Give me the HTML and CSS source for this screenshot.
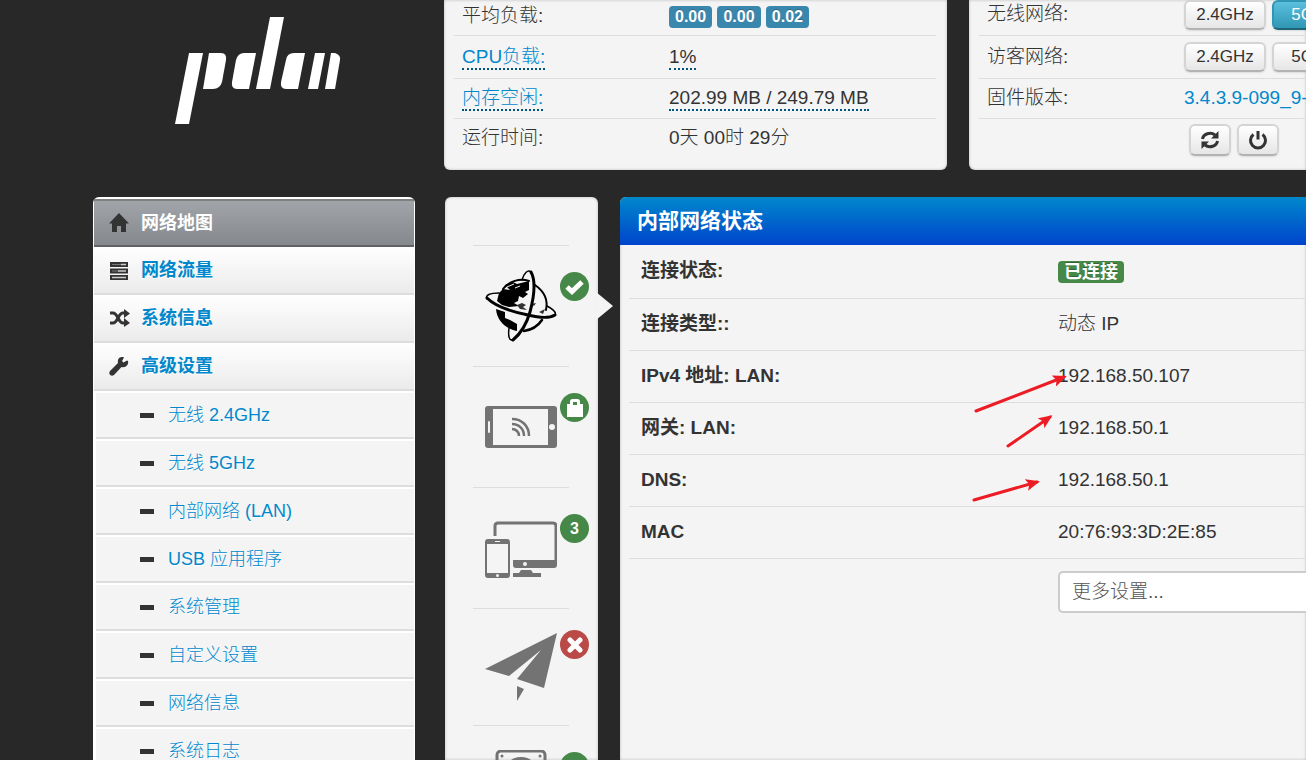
FILE: index.html
```html
<!DOCTYPE html>
<html lang="zh-CN">
<head>
    <meta charset="UTF-8">
    <meta name="viewport" content="width=device-width, initial-scale=1.0">
    <title>网络地图</title>
    <link rel="stylesheet" href="styles.css">
</head>
<body>
    <div class="wrapper">
        <header class="top-row">
            <a href="#" class="logo" aria-label="pdcn">
                <svg width="168" height="108" viewBox="0 0 168 108" fill="#fff">
                    <path d="M14 36H28L14 107H0Z"/>
                    <path d="M34 36H46Q52 36 51 43L47 65Q45 72 38 72H28Z"/>
                    <path d="M81 36H69Q63 36 61 43L57 65Q56 72 62 72H74Z"/>
                    <path d="M95 0H109L95 72H81Z"/>
                    <path d="M130 36H119Q112 36 111 43L106 65Q105 72 111 72H123Z"/>
                    <path d="M140 36H150L143 72H133Z"/>
                    <path d="M156 36H160Q166 38 165 43L160 72H150Z"/>
                </svg>
            </a>

            <section class="panel status-panel">
                <table class="status-table">
                    <tr><th>平均负载:</th><td><span class="label label-info">0.00</span> <span class="label label-info">0.00</span> <span class="label label-info">0.02</span></td></tr>
                    <tr><th><a href="#" class="dotted">CPU负载:</a></th><td><span class="dotted">1%</span></td></tr>
                    <tr><th><a href="#" class="dotted">内存空闲:</a></th><td><span class="dotted">202.99 MB / 249.79 MB</span></td></tr>
                    <tr><th>运行时间:</th><td>0天 00时 29分</td></tr>
                </table>
            </section>

            <section class="panel status-panel wifi-panel">
                <table class="status-table">
                    <tr><th>无线网络:</th><td><div class="buttons"><button class="btn">2.4GHz</button><button class="btn btn-info">5GHz</button></div></td></tr>
                    <tr><th>访客网络:</th><td><div class="buttons"><button class="btn">2.4GHz</button><button class="btn">5GHz</button></div></td></tr>
                    <tr><th>固件版本:</th><td><a href="#">3.4.3.9-099_9-1</a></td></tr>
                    <tr>
                        <th></th>
                        <td>
                            <div class="buttons tools">
                                <button class="btn btn-icon" aria-label="刷新">
                                    <svg width="20" height="20" viewBox="0 0 20 20" fill="none" stroke="#333" stroke-width="3">
                                        <path d="M2.500 9A7.500 6.500 0 0 1 15 5M17.500 11A7.500 6.500 0 0 1 5 15"/>
                                        <path d="M18.500 1V8.500H11ZM1.500 19V11.500H9Z" fill="#333" stroke="none"/>
                                    </svg>
                                </button>
                                <button class="btn btn-icon" aria-label="重启">
                                    <svg width="20" height="20" viewBox="0 0 20 20" fill="none" stroke="#333" stroke-width="3">
                                        <path d="M5.500 4.500A7.500 7.500 0 1 0 14.500 4.500M10 1V9.500"/>
                                    </svg>
                                </button>
                            </div>
                        </td>
                    </tr>
                </table>
            </section>
        </header>

        <div class="main-row">
            <nav class="sidebar">
                <a href="#" class="item active">
                    <svg width="20" height="20" viewBox="0 0 20 20" fill="#333"><path d="M10 0L20 10.500H17V19H12V13H8V19H3V10.500H0Z"/></svg>
                    网络地图
                </a>
                <a href="#" class="item">
                    <svg width="20" height="20" viewBox="0 0 20 20"><path d="M1 2H19V7H1ZM1 8.500H19V13.500H1ZM1 15H19V20H1Z" fill="#333"/><path d="M12 4.500H17M9 11H17M3 17.500H17" stroke="#ccc" stroke-width="1.500"/><path d="M3 4.500H12M3 11H9" stroke="#777"/></svg>
                    网络流量
                </a>
                <a href="#" class="item">
                    <svg width="20" height="20" viewBox="0 0 20 20" fill="none" stroke="#333" stroke-width="3"><path d="M1 5H4C9 5 9 15 14 15H16M1 15H4C9 15 9 5 14 5H16"/><path d="M15 1L21 5.500L15 10ZM15 10L21 15L15 19Z" fill="#333" stroke="none"/></svg>
                    系统信息
                </a>
                <a href="#" class="item">
                    <svg width="20" height="20" viewBox="0 0 20 20" fill="#333"><path d="M18 4.500L14.500 6.500L13 5L15 1.500C12 0 8 2 9 7L1 15C-1 18 2 21 5 19L12.500 11C17 12 20 8.500 19 5Z"/></svg>
                    高级设置
                </a>
                <div class="submenu">
                    <a href="#">无线 2.4GHz</a>
                    <a href="#">无线 5GHz</a>
                    <a href="#">内部网络 (LAN)</a>
                    <a href="#">USB 应用程序</a>
                    <a href="#">系统管理</a>
                    <a href="#">自定义设置</a>
                    <a href="#">网络信息</a>
                    <a href="#">系统日志</a>
                </div>
            </nav>

            <div class="panel devices">
                <a href="#" class="device selected" aria-label="互联网">
                    <svg width="72" height="72" viewBox="0 0 72 72">
                        <g fill="none" stroke="#000" stroke-linecap="round">
                            <path d="M50 15C60 22 63 31 61 40" stroke-width="2"/>
                            <path d="M39 61C46 60 53 56 57 50" stroke-width="2.500"/>
                            <path d="M18 19C24 11 35 8 44 11" stroke-width="2"/>
                        </g>
                        <path d="M12 31L14 23L18 19L25 20L20 15L28 12L32 14L44 11V20L40 22L43 24L38 28L34 26L33 31L29 33L34 36L24 37L17 35Z"/>
                        <path d="M11 39L20 42L20 48L25 50L32 54V61C21 59 12 51 11 39Z"/>
                        <path d="M32 35L37 33L41 35L38 37L42 40L35 39ZM46 34L51 33L49 36ZM54 42L60 39L58 44Z" fill="#333"/>
                        <path d="M22 17L29 14M30 18L35 16" stroke="#f4f4f4"/>
                        <g fill="none" stroke="#000" stroke-linecap="round">
                            <path d="M37 10C39 3 43 -1 46 2M28 70C24 71 23 66 24 58" stroke-width="1.500"/>
                            <path d="M46 2C51 11 49 27 45 42C41 56 34 65 28 70" stroke-width="3"/>
                            <path d="M14 23C5 23 0 25 2 29M70 45C72 42 66 38 62 36" stroke-width="1.500"/>
                            <path d="M2 28C10 36 28 42 43 45C55 48 65 48 70 45" stroke-width="3"/>
                        </g>
                    </svg>
                    <span class="badge"><svg width="19" height="16" viewBox="0 0 19 16"><path d="M2 8L7 12.500L17 3" fill="none" stroke="#fff" stroke-width="5"/></svg></span>
                </a>
                <a href="#" class="device" aria-label="无线">
                    <svg width="72" height="72" viewBox="0 0 72 72" fill="#737373">
                        <rect y="15" width="72" height="42" rx="3"/>
                        <rect x="8" y="18" width="55" height="36" fill="#f4f4f4"/>
                        <rect x="3" y="30" width="2" height="12" rx="1" fill="#f4f4f4"/>
                        <circle cx="67" cy="36" r="3" fill="#f4f4f4"/>
                        <path d="M27 28C37 28 44 35 44 45M27 33C34 33 39 38 39 45M27 38C31 38 34 41 34 45" fill="none" stroke="#737373" stroke-width="2.500"/>
                    </svg>
                    <span class="badge"><svg width="18" height="18" viewBox="0 0 18 18"><path d="M1 5H17V18H1Z" fill="#fff"/><path d="M5.500 7V2.500Q5.500 1.500 6.500 1.500H11.500Q12.500 1.500 12.500 2.500V7" fill="none" stroke="#fff" stroke-width="3"/><path d="M7 3H11V6H7Z" fill="#468847"/></svg></span>
                </a>
                <a href="#" class="device" aria-label="客户端">
                    <svg width="72" height="72" viewBox="0 0 72 72" fill="#737373">
                        <path d="M10 24V14Q10 11 13 11H68Q71 11 71 14V50" fill="none" stroke="#737373" stroke-width="3"/>
                        <path d="M28 48H72V53Q72 56 69 56H31Q28 56 28 53ZM36 58H46L48 61H56V65H28V61H34Z"/>
                        <circle cx="40" cy="52" r="2" fill="#f4f4f4"/>
                        <rect y="27" width="25" height="39" rx="3"/>
                        <path d="M2 32H23V61H2ZM10 29H15V30H10Z" fill="#f4f4f4"/>
                        <circle cx="12.500" cy="63.500" r="1.500" fill="#f4f4f4"/>
                    </svg>
                    <span class="badge">3</span>
                </a>
                <a href="#" class="device short" aria-label="VPN">
                    <svg width="72" height="72" viewBox="0 0 72 72" fill="#737373">
                        <path d="M72 0L0 36L24 43L56 17L32 46L59 55ZM32 53L39 56L32 68Z"/>
                    </svg>
                    <span class="badge badge-important"><svg width="16" height="16" viewBox="0 0 16 16"><path d="M3 3L13 13M13 3L3 13" stroke="#fff" stroke-width="5" stroke-linecap="round"/></svg></span>
                </a>
                <a href="#" class="device" aria-label="磁盘">
                    <svg width="72" height="72" viewBox="0 0 72 72" fill="#737373">
                        <rect x="12" y="1" width="48" height="68" rx="4" fill="none" stroke="#737373" stroke-width="3"/>
                        <circle cx="36" cy="25" r="18"/>
                        <circle cx="17" cy="6" r="1.500"/><circle cx="55" cy="6" r="1.500"/>
                    </svg>
                    <span class="badge"><svg width="18" height="18" viewBox="0 0 18 18"><path d="M5 10C4 2 14 2 13 10" fill="none" stroke="#fff" stroke-width="3"/></svg></span>
                </a>
            </div>

            <main class="panel content">
                <h1>内部网络状态</h1>
                <table class="info-table">
                    <tr><th>连接状态:</th><td><span class="label label-success">已连接</span></td></tr>
                    <tr><th>连接类型::</th><td>动态 IP</td></tr>
                    <tr><th>IPv4 地址: LAN:</th><td>192.168.50.107</td></tr>
                    <tr><th>网关: LAN:</th><td>192.168.50.1</td></tr>
                    <tr><th>DNS:</th><td>192.168.50.1</td></tr>
                    <tr><th>MAC</th><td>20:76:93:3D:2E:85</td></tr>
                    <tr>
                        <th></th>
                        <td>
                            <select class="more" aria-label="更多设置">
                                <option>更多设置...</option>
                            </select>
                        </td>
                    </tr>
                </table>
                <svg class="arrows" width="110" height="140" viewBox="0 0 110 140" stroke="#ed1c24" fill="#ed1c24">
                    <defs>
                        <marker id="head" markerWidth="14" markerHeight="12" refX="11" refY="6" orient="auto" markerUnits="userSpaceOnUse">
                            <path d="M0 0L14 6L0 12L3 6Z" stroke="none"/>
                        </marker>
                    </defs>
                    <g stroke-width="3" stroke-linecap="round" marker-end="url(#head)">
                        <path d="M10 46L98 12"/>
                        <path d="M42 81L84 52"/>
                        <path d="M8 135L71 117"/>
                    </g>
                </svg>
            </main>
        </div>
    </div>
</body>
</html>
```

FILE: styles.css
```css
:root {
    --page-bg: #282828;
    --panel-bg: #f4f4f4;
    --line: #ddd;
    --link: #0088cc;
    --text: #333;
}

* {
    box-sizing: border-box;
}

body {
    margin: 0;
    background: var(--page-bg);
    color: var(--text);
    font-family: "Liberation Sans", "Noto Sans CJK SC", sans-serif;
    font-size: 19px;
    font-weight: 300;
    line-height: 28px;
}

a {
    color: var(--link);
    text-decoration: none;
}

.wrapper {
    display: flex;
    flex-direction: column;
    height: 100vh;
    padding-left: 93px;
    overflow: hidden;
}

.top-row {
    display: grid;
    grid-template-columns: 322px 510fr 337fr;
    column-gap: 22px;
    margin-bottom: 27px;
}

.logo {
    padding: 17px 0 0 82px;
}

.panel {
    background: var(--panel-bg);
    border-radius: 6px;
    box-shadow: inset 0 0 3px rgba(0, 0, 0, 0.25);
}

.status-panel {
    margin-left: 7px;
    padding: 0 11px 12px 10px;
    border-radius: 0 0 6px 6px;
}

.wifi-panel {
    margin-left: 0;
    padding-right: 0;
    border-bottom-right-radius: 0;
    overflow: hidden;
}

table {
    width: 100%;
    table-layout: fixed;
    border-collapse: collapse;
}

th {
    text-align: left;
    font-weight: inherit;
}

td {
    padding: 0;
    white-space: nowrap;
}

.status-table th {
    width: 215px;
    padding: 0 0 0 8px;
}

.wifi-panel th {
    width: 205px;
}

.status-table tr {
    height: 43px;
    border-bottom: 1px solid var(--line);
}

.status-table tr:first-child {
    height: 35px;
}

.status-table tr:first-child > * {
    padding-bottom: 2px;
}

.wifi-panel tr:first-child > * {
    vertical-align: top;
}

.status-table tr:nth-child(3) {
    height: 40px;
}

.status-table tr:last-child {
    height: 40px;
    border-bottom: 0;
}

.dotted {
    display: inline-block;
    line-height: 22px;
    border-bottom: 2px dotted #005580;
}

.label {
    display: inline-block;
    padding: 0 6px;
    border-radius: 4px;
    color: #fff;
    font-size: 16px;
    font-weight: bold;
    line-height: 22px;
    text-shadow: 0 -1px 0 rgba(0, 0, 0, 0.25);
}

.label-info {
    background: #3a87ad;
}

.label-success {
    background: #468847;
    font-size: 18px;
    vertical-align: middle;
}

.buttons {
    display: flex;
    gap: 6px;
}

.tools {
    padding: 4px 0 0 5px;
}

.btn {
    flex: none;
    width: 82px;
    height: 30px;
    padding: 0;
    border: 2px solid #d4d4d4;
    border-bottom-color: #b3b3b3;
    border-radius: 6px;
    background: linear-gradient(#fff, #e6e6e6);
    box-shadow: 0 1px 2px rgba(0, 0, 0, 0.1);
    color: var(--text);
    font-family: inherit;
    font-size: 17px;
    line-height: 24px;
}

.btn-info {
    border-color: #2f96b4 #2f96b4 #1f6377;
    background: linear-gradient(#5bc0de, #2f96b4);
    color: #fff;
}

.btn-icon {
    display: flex;
    align-items: center;
    justify-content: center;
    width: 42px;
    height: 32px;
}

.main-row {
    display: grid;
    flex: 1;
    min-height: 0;
    grid-template-columns: 322px 161px 1fr;
    grid-template-rows: 100%;
    column-gap: 22px;
}

/* Sidebar */
.sidebar {
    padding: 2px 1px 0;
    border-radius: 6px 6px 0 0;
    background: #fff;
    font-size: 18px;
    overflow: hidden;
}

.sidebar a {
    display: flex;
    align-items: center;
    height: 48px;
    border-bottom: 2px solid var(--line);
    text-shadow: 0 1px 0 #fff;
}

.sidebar .item {
    gap: 12px;
    padding-left: 15px;
    background: linear-gradient(#fff, #ebebeb);
    font-weight: bold;
}

.sidebar .active {
    border-top: 2px solid #808080;
    border-bottom-color: #606164;
    background: linear-gradient(#a1a5aa, #85898d);
    color: #fff;
    text-shadow: none;
}

.sidebar .item svg {
    overflow: visible;
}

.submenu {
    padding-left: 2px;
}

.submenu a {
    gap: 14px;
    padding-left: 44px;
    border-top: 2px solid #fff;
    background: var(--panel-bg);
}

.submenu a::before {
    content: "";
    width: 14px;
    height: 5px;
    background: #333;
}

/* Device column */
.devices {
    margin-left: 8px;
    padding: 48px 29px 0 28px;
    border-radius: 6px 6px 0 0;
}

.device {
    position: relative;
    display: block;
    height: 121px;
    padding: 24px 12px;
    border-top: 1px solid var(--line);
}

.device.short {
    height: 117px;
}

.badge {
    position: absolute;
    top: 26px;
    right: -20px;
    display: flex;
    align-items: center;
    justify-content: center;
    width: 29px;
    height: 29px;
    border-radius: 50%;
    background: #468847;
    color: #fff;
    font-size: 16px;
    font-weight: bold;
}

.badge-important {
    top: 21px;
    background: #b94a48;
}

.selected::after {
    content: "";
    position: absolute;
    top: 46px;
    right: -44px;
    border: 14px solid transparent;
    border-left: 17px solid var(--panel-bg);
    border-right: 0;
}

/* Status content */
.content {
    position: relative;
    border-radius: 6px 0 0 0;
    overflow: hidden;
}

.content h1 {
    margin: 0;
    padding-left: 17px;
    background: linear-gradient(#0088cc, #0044cc);
    color: #fff;
    font-size: 21px;
    line-height: 48px;
}

.info-table {
    margin-left: 9px;
}

.info-table tr {
    height: 52px;
    border-bottom: 1px solid var(--line);
}

.info-table tr:first-child {
    height: 53px;
}

.info-table tr:last-child {
    height: 68px;
    border-bottom: 0;
}

.info-table th {
    width: 429px;
    padding: 0 0 0 12px;
    font-weight: bold;
}

.more {
    display: block;
    width: 100%;
    height: 42px;
    padding: 0 12px;
    border: 2px solid #ccc;
    border-right: 0;
    border-radius: 5px 0 0 5px;
    background: #fff;
    color: #555;
    font: inherit;
    appearance: none;
}

.arrows {
    position: absolute;
    top: 168px;
    left: 346px;
}
```
